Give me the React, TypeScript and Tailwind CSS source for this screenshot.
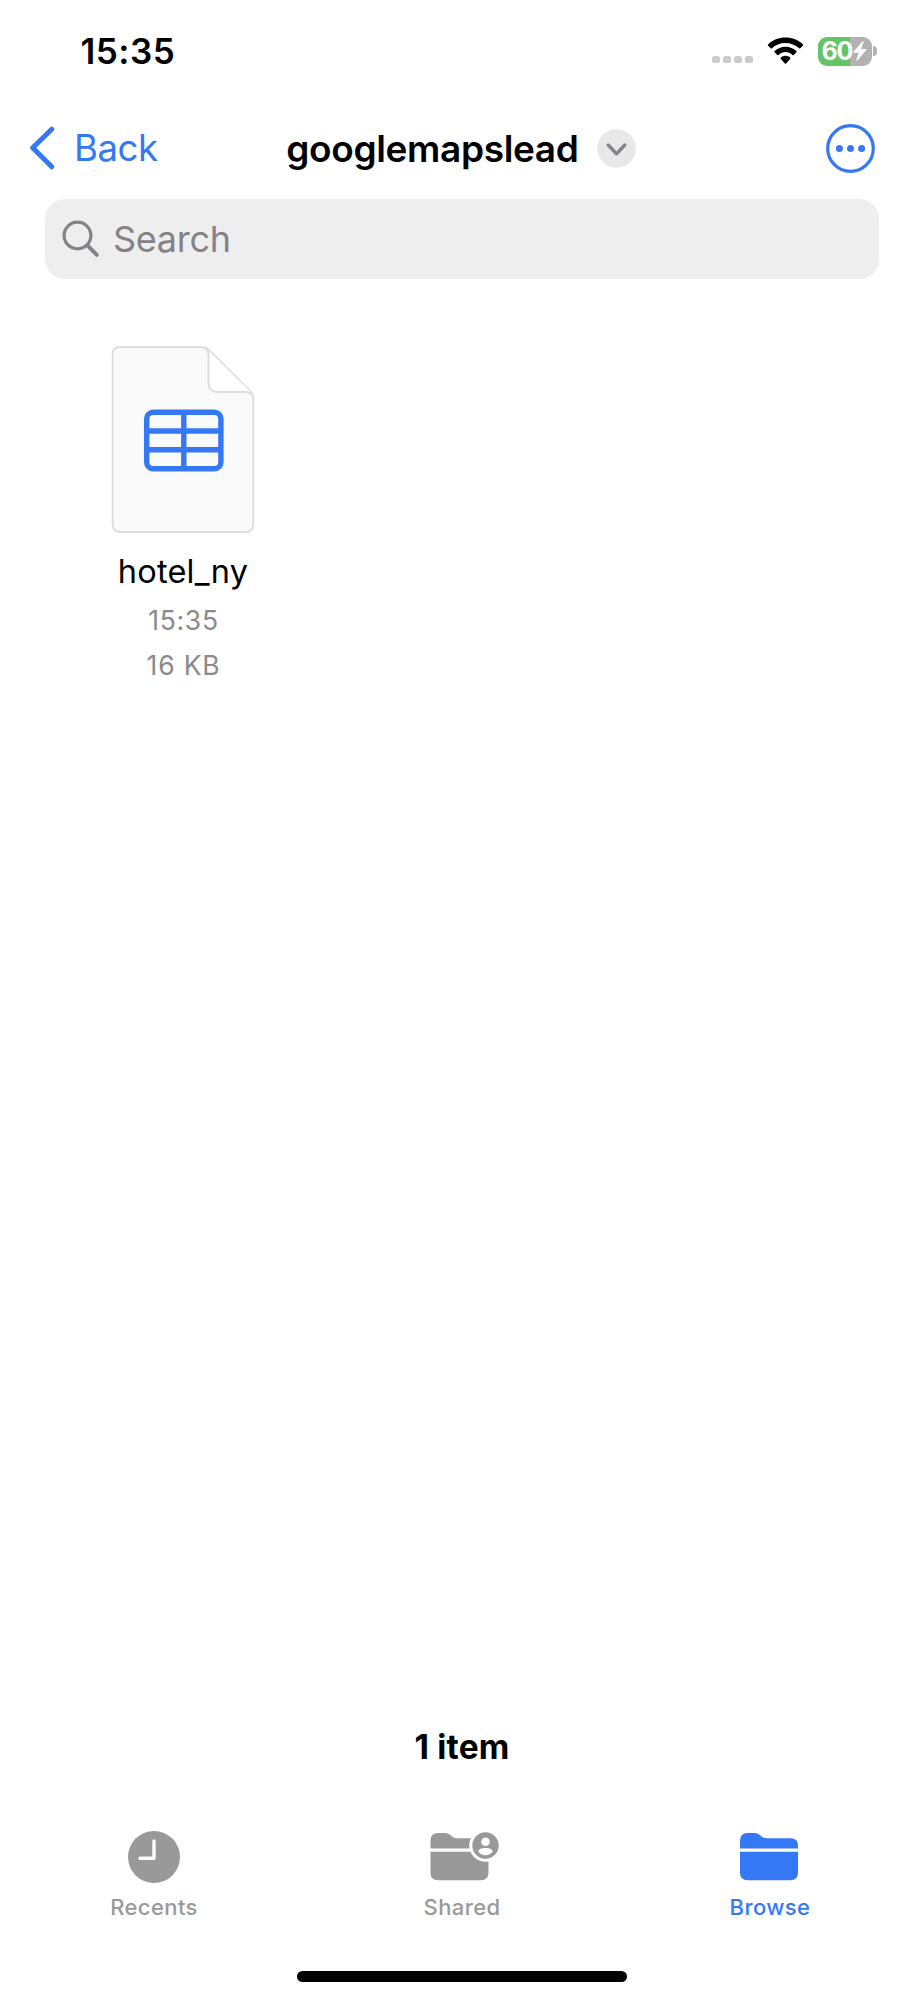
import type { ReactNode } from 'react';

function StatusBar() {
  return (
    <header className="flex h-[102px] items-center justify-between pl-[80.5px] pr-[47.5px]">
      <span className="text-[35px] leading-none font-semibold tracking-[0.5px]">15:35</span>
      <div className="flex items-center">
        <div className="mt-[17px] mr-[14px] flex gap-[3.5px]">
          {[0, 1, 2, 3].map((n) => (
            <span key={n} className="size-[7.6px] rounded-[2.5px] bg-[#cbcbcb]" />
          ))}
        </div>
        <svg className="mr-[13.5px] -mt-[1px]" width="37" height="28" viewBox="0 0 37 28">
          <path d="M18.5 0.5C25.2 0.5 31.4 3.1 36 7.4C36.4 7.8 36.4 8.2 36 8.6L33.3 11.3C33 11.6 32.5 11.6 32.1 11.3C28.5 7.9 23.7 5.9 18.5 5.9C13.3 5.9 8.5 7.9 4.9 11.3C4.5 11.6 4 11.6 3.7 11.3L1 8.6C0.6 8.2 0.6 7.8 1 7.4C5.6 3.1 11.8 0.5 18.5 0.5Z" />
          <path d="M18.5 9.7C22.7 9.7 26.5 11.3 29.4 14C29.8 14.4 29.8 14.9 29.4 15.2L26.7 17.9C26.4 18.2 25.9 18.2 25.5 17.9C23.6 16.2 21.2 15.1 18.5 15.1C15.8 15.1 13.4 16.2 11.5 17.9C11.1 18.2 10.6 18.2 10.3 17.9L7.6 15.2C7.2 14.9 7.2 14.4 7.6 14C10.5 11.3 14.3 9.7 18.5 9.7Z" />
          <path d="M18.5 18.8C20.3 18.8 21.9 19.5 23.1 20.6C23.5 21 23.5 21.5 23.1 21.9L19.1 26.5C18.7 26.9 18.3 26.9 17.9 26.5L13.9 21.9C13.5 21.5 13.5 21 13.9 20.6C15.1 19.5 16.7 18.8 18.5 18.8Z" />
        </svg>
        <div className="flex items-center gap-[1.5px]">
          <div className="flex h-[29px] w-[54px] items-center rounded-[9px] bg-linear-to-r from-[#65c466] from-60% to-[#b2b2b2] to-60% pl-[4px] text-white">
            <span className="text-[25px] leading-none font-bold tracking-[-1.2px]">60</span>
            <svg className="ml-[1px]" width="14" height="20" viewBox="0 0 14 20" fill="currentColor">
              <path d="M9.4 0.4L0.6 10.6C0.2 11.1 0.4 11.7 1 11.7H5.8L3.4 18.6C3.1 19.5 4 19.9 4.6 19.3L13.3 9C13.8 8.5 13.5 7.9 12.9 7.9H8.1L10.6 1.1C10.9 0.2 10 -0.2 9.4 0.4Z" />
            </svg>
          </div>
          <span className="h-[9.5px] w-[3.5px] rounded-r-full bg-[#b2b2b2]" />
        </div>
      </div>
    </header>
  );
}

function NavBar() {
  return (
    <nav className="grid h-[92px] grid-cols-[257px_1fr_257px] items-center">
      <button className="flex items-center pl-[29px] text-[#3478f6]">
        <svg width="27" height="44" viewBox="0 0 27 44" fill="none" stroke="currentColor" strokeWidth="5" strokeLinecap="round" strokeLinejoin="round">
          <path d="M22.7 3.2L3.7 21.7L22.7 40.8" />
        </svg>
        <span className="ml-[18px] text-[36.5px] leading-none tracking-[-0.4px]">Back</span>
      </button>
      <button className="flex items-center justify-end pr-[31.5px]">
        <span className="text-[37px] leading-none font-semibold tracking-[-0.35px]">googlemapslead</span>
        <svg className="ml-[18px] shrink-0" width="39" height="39" viewBox="0 0 39 39" fill="none">
          <circle cx="19.5" cy="19.5" r="19.3" fill="#e8e8e8" />
          <path d="M11.2 16L19.5 24.8L27.8 16" stroke="#848488" strokeWidth="3.4" strokeLinecap="round" strokeLinejoin="round" />
        </svg>
      </button>
      <button className="flex justify-end pr-[49px] text-[#3478f6]">
        <svg width="49" height="49" viewBox="0 0 49 49" fill="currentColor">
          <circle cx="24.5" cy="24.5" r="22.8" fill="none" stroke="currentColor" strokeWidth="3.2" />
          <circle cx="13.4" cy="24.5" r="3.5" />
          <circle cx="24.5" cy="24.5" r="3.5" />
          <circle cx="35.6" cy="24.5" r="3.5" />
        </svg>
      </button>
    </nav>
  );
}

function SearchField() {
  return (
    <div className="mx-[45px] mt-[5px] flex h-[80px] shrink-0 items-center rounded-[20px] bg-[#eeeeef] pl-[17px] text-[#838387]">
      <svg width="38" height="38" viewBox="0 0 38 38" fill="none" stroke="currentColor" strokeWidth="3.2" strokeLinecap="round">
        <circle cx="15.5" cy="15.5" r="13.4" />
        <path d="M25.4 25.4L34.8 34.8" strokeWidth="4" />
      </svg>
      <span className="ml-[13px] text-[36px] leading-none tracking-[-0.3px]">Search</span>
    </div>
  );
}

function FileCell() {
  return (
    <div className="flex w-[200px] flex-col items-center">
      <svg width="144" height="188" viewBox="0 0 144 188" fill="none">
        <path d="M9 2H90Q95 2 98 5L139.500 46.500Q142.300 49.300 142.300 54V179Q142.300 187 134.500 187H9Q1.700 187 1.700 179V9.500Q1.700 2 9 2Z" fill="#fafafa" stroke="#dedede" strokeWidth="2" />
        <path d="M97 5V38Q97.500 46.700 106 46.700H139.500Z" fill="#ffffff" />
        <path d="M93 2.500Q97.500 4.500 97.500 10V38Q97.500 46.900 106.500 46.900H134Q139 46.900 141 50" stroke="#dedede" strokeWidth="2" />
        <g stroke="#3478f6" strokeWidth="5.400">
          <rect x="35.700" y="67.200" width="74.200" height="56.600" rx="6.500" />
          <path d="M72.800 66.500V123.500M35 86H110M35 104.800H110" />
        </g>
      </svg>
      <span className="mt-[20px] text-[32.5px] leading-[38px] tracking-[0.2px]">hotel_ny</span>
      <span className="mt-[12px] pl-[1px] text-[26.5px] leading-[34px] tracking-[0.7px] text-[#8a8a8e]">15:35</span>
      <span className="mt-[11px] pl-[1px] text-[26.5px] leading-[34px] tracking-[0.8px] text-[#8a8a8e]">16 KB</span>
    </div>
  );
}

const folderTop = 'M0 15.500V7.500Q0 0 7.500 0H14.500Q17.500 0 19.500 1.700L22 3.800Q24 5.300 27 5.300H50.500Q58 5.300 58 12.500V15.500Z';
const folderBody = 'M0 18.800H58V39.500Q58 47.300 50.300 47.300H7.700Q0 47.300 0 39.500Z';

function Tab({ label, color, children }: { label: string; color: string; children: ReactNode }) {
  return (
    <button className={`flex flex-col items-center ${color}`}>
      {children}
      <span className="mt-[9.5px] text-[22px] leading-[28px] font-medium tracking-[0.4px]">{label}</span>
    </button>
  );
}

function TabBar() {
  return (
    <nav className="grid grid-cols-3">
      <Tab label="Recents" color="text-[#999999]">
        <svg width="80" height="54" viewBox="0 0 80 54" fill="none">
          <circle cx="40" cy="27" r="26" fill="currentColor" />
          <path d="M40 11V28.300H26" stroke="white" strokeWidth="3.400" strokeLinecap="round" strokeLinejoin="round" />
        </svg>
      </Tab>
      <Tab label="Shared" color="text-[#999999]">
        <svg width="80" height="54" viewBox="0 0 80 54" fill="currentColor">
          <g transform="translate(8.500 3)">
            <path d={folderTop} />
            <path d={folderBody} />
          </g>
          <circle cx="63.500" cy="15.500" r="16.300" fill="white" />
          <circle cx="63.500" cy="15.500" r="13.200" />
          <circle cx="63.500" cy="11.800" r="4.300" fill="white" />
          <path d="M56.300 21.800C56.300 19.300 59.500 18 63.500 18C67.500 18 70.700 19.300 70.700 21.800C69 24 66.500 25.300 63.500 25.300C60.500 25.300 58 24 56.300 21.800Z" fill="white" />
        </svg>
      </Tab>
      <Tab label="Browse" color="text-[#3478f6]">
        <svg width="80" height="54" viewBox="0 0 80 54" fill="currentColor">
          <g transform="translate(10 3)">
            <path d={folderTop} />
            <path d={folderBody} />
          </g>
        </svg>
      </Tab>
    </nav>
  );
}

export default function App() {
  return (
    <div className="flex h-[2000px] w-[924px] flex-col overflow-hidden bg-white font-['Inter',sans-serif] text-black">
      <StatusBar />
      <NavBar />
      <SearchField />
      <main className="flex-1 pt-[66px] pl-[83px]">
        <FileCell />
      </main>
      <footer className="flex flex-col">
        <p className="mb-[63px] text-center text-[33.5px] leading-[40px] font-bold tracking-[0.2px]">1 item</p>
        <TabBar />
        <div className="mx-auto mt-[50px] mb-[18px] h-[11px] w-[330px] rounded-full bg-black" />
      </footer>
    </div>
  );
}
